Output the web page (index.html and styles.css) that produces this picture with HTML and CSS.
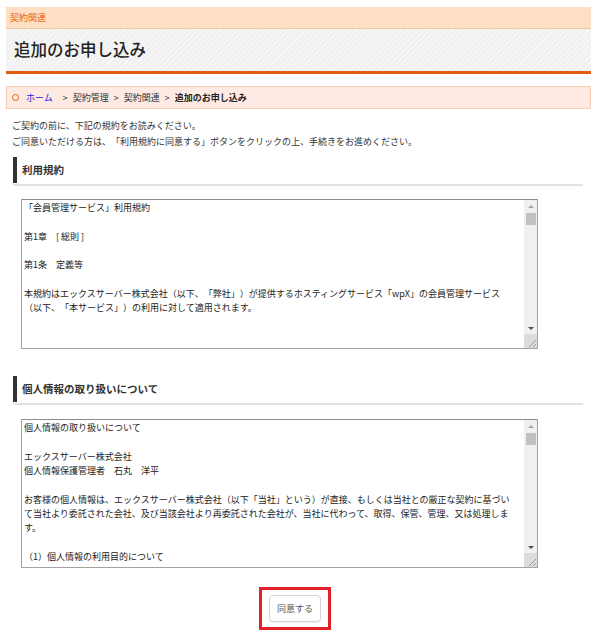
FILE: index.html
```html
<!DOCTYPE html>
<html lang="ja">
<head>
<meta charset="utf-8">
<title>追加のお申し込み</title>
<link rel="stylesheet" href="styles.css">
</head>
<body>
<div class="page">
  <div class="catbar">契約関連</div>
  <div class="titlebox"><h1 class="title">追加のお申し込み</h1></div>

  <div class="crumbs">
    <span class="crumb-dot"></span>
    <a class="crumb-home" href="#">ホーム</a>
    <span class="sep">&gt;</span><span>契約管理</span><span class="sep">&gt;</span><span>契約関連</span><span class="sep">&gt;</span><span class="crumb-current">追加のお申し込み</span>
  </div>

  <div class="intro">
    <p>ご契約の前に、下記の規約をお読みください。</p>
    <p>ご同意いただける方は、「利用規約に同意する」ボタンをクリックの上、手続きをお進めください。</p>
  </div>

  <h2 class="sec-head"><span class="sec-bar">利用規約</span></h2>
  <div class="tbox">
    <div class="tbox-text">「会員管理サービス」利用規約

第1章　[ 総則 ]

第1条　定義等

本規約はエックスサーバー株式会社（以下、「弊社」）が提供するホスティングサービス「wpX」の会員管理サービス
（以下、「本サービス」）の利用に対して適用されます。</div>
    <div class="sbar">
      <div class="sbar-btn"><span class="arrow-up"></span></div>
      <div class="sbar-track"><div class="sbar-thumb"></div></div>
      <div class="sbar-btn"><span class="arrow-down"></span></div>
      <div class="sbar-corner"><svg width="12" height="12" viewBox="0 0 12 12"><path d="M11 4 L4 11 M11 8 L8 11" stroke="#9a9a9a" stroke-width="1" fill="none"/></svg></div>
    </div>
  </div>

  <h2 class="sec-head sec-head2"><span class="sec-bar">個人情報の取り扱いについて</span></h2>
  <div class="tbox tbox2">
    <div class="tbox-text">個人情報の取り扱いについて

エックスサーバー株式会社
個人情報保護管理者　石丸　洋平

お客様の個人情報は、エックスサーバー株式会社（以下「当社」という）が直接、もしくは当社との厳正な契約に基づい
て当社より委託された会社、及び当該会社より再委託された会社が、当社に代わって、取得、保管、管理、又は処理しま
す。

（1）個人情報の利用目的について</div>
    <div class="sbar">
      <div class="sbar-btn"><span class="arrow-up"></span></div>
      <div class="sbar-track"><div class="sbar-thumb"></div></div>
      <div class="sbar-btn"><span class="arrow-down"></span></div>
      <div class="sbar-corner"><svg width="12" height="12" viewBox="0 0 12 12"><path d="M11 4 L4 11 M11 8 L8 11" stroke="#9a9a9a" stroke-width="1" fill="none"/></svg></div>
    </div>
  </div>

  <div class="actions">
    <div class="highlight">
      <button class="agree" type="button">同意する</button>
    </div>
  </div>
</div>
</body>
</html>
```

FILE: styles.css
```css
* { box-sizing: border-box; }
html, body { margin: 0; padding: 0; background: #fff; }
body {
  font-family: "Noto Sans CJK JP", "Noto Sans", sans-serif;
  color: #333;
  font-size: 9px;
  text-spacing-trim: space-all;
}
.page {
  width: 585px;
  margin: 7px 0 0 6px;
}
.catbar {
  height: 22px;
  background: #ffdfc3;
  border-bottom: 1px solid #f3c6a6;
  color: #e8620f;
  font-size: 9px;
  line-height: 21px;
  padding-left: 4px;
}
.titlebox {
  height: 45px;
  background-color: #f1f1f1;
  background-image: repeating-linear-gradient(135deg, rgba(255,255,255,0.55) 0 1px, transparent 1px 4px);
  border-bottom: 3px solid #e35b0e;
  display: flex;
  align-items: center;
  padding-left: 8px;
}
.title {
  margin: 0;
  font-size: 16.5px;
  font-weight: 500;
  color: #222;
  line-height: 20px;
  padding-bottom: 3px;
}
.crumbs {
  margin-top: 12px;
  height: 23px;
  background: #feeae2;
  border: 1px solid #f8cbb5;
  display: flex;
  align-items: center;
  padding-left: 5px;
  font-size: 9px;
  line-height: 12px;
  color: #333;
}
.crumb-dot {
  width: 7px;
  height: 7px;
  border: 1.3px solid #e8620f;
  border-radius: 50%;
  margin-right: 7px;
}
.crumb-home {
  color: #2222dd;
  text-decoration: none;
  margin-right: 10px;
}
.sep { margin: 0 5px 0 0; }
.sep ~ .sep { margin-left: 5px; }
.crumb-current { font-weight: 700; color: #222; }
.intro {
  margin-top: 9px;
  padding-left: 6px;
  font-size: 9px;
  line-height: 16px;
  color: #333;
}
.intro p { margin: 0; }
.sec-head {
  margin: 7px 8px 0 7px;
  padding-bottom: 1px;
  border-bottom: 2px solid #e3e3e3;
  font-size: 10.5px;
  font-weight: 700;
  color: #333;
}
.sec-bar {
  display: flex;
  align-items: center;
  height: 26px;
  border-left: 4px solid #333;
  padding-left: 5px;
  line-height: 14px;
}
.sec-head2 { margin-top: 27px; }
.tbox {
  margin: 13px 0 0 15px;
  width: 517px;
  height: 150px;
  border: 1px solid #a3a3a3;
  border-top-color: #8c8c8c;
  display: flex;
  background: #fff;
}
.tbox2 { margin-top: 14px; height: 149px; }
.tbox-text {
  flex: 1;
  overflow: hidden;
  white-space: pre;
  padding: 1px 2px;
  font-size: 9px;
  line-height: 14.35px;
  color: #222;
}
.sbar {
  width: 13px;
  display: flex;
  flex-direction: column;
  background: #f0f0f0;
}
.sbar-btn {
  height: 12px;
  display: flex;
  align-items: center;
  justify-content: center;
}
.arrow-up {
  width: 0; height: 0;
  border-left: 3px solid transparent;
  border-right: 3px solid transparent;
  border-bottom: 3px solid #a3a3a3;
}
.arrow-down {
  width: 0; height: 0;
  border-left: 3px solid transparent;
  border-right: 3px solid transparent;
  border-top: 3px solid #505050;
}
.sbar-track {
  flex: 1;
  padding: 1px 1px 0 2px;
}
.sbar-thumb {
  height: 12px;
  background: #c1c1c1;
}
.sbar-corner {
  height: 14px;
  background: #dcdcdc;
  display: flex;
  align-items: flex-end;
  justify-content: flex-end;
}
.sbar-corner svg { display: block; }
.actions {
  margin-top: 19px;
  display: flex;
  justify-content: center;
  padding-right: 7px;
}
.highlight {
  border: 3px solid #e41f27;
  padding: 5px 7px;
}
.agree {
  width: 52px;
  height: 27px;
  border: 1px solid #d6d6d6;
  border-radius: 4px;
  background: #fff;
  box-shadow: 0 1px 1px rgba(0,0,0,0.08);
  font-family: "Noto Sans CJK JP", "Noto Sans", sans-serif;
  font-size: 9px;
  color: #555;
  padding: 0;
  display: block;
}
```
